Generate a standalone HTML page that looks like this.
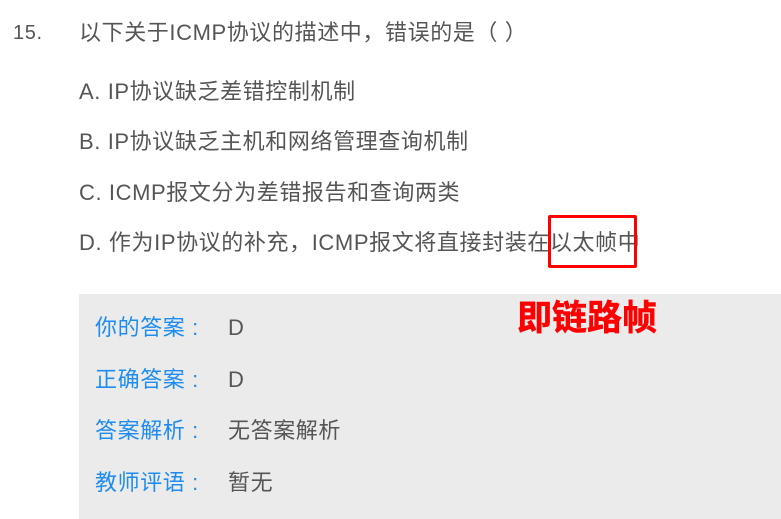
<!DOCTYPE html>
<html><head><meta charset="utf-8"><style>
body{margin:0;width:781px;height:519px;background:#fff;position:relative;overflow:hidden;font-family:"Liberation Sans","Noto Sans CJK SC",sans-serif;color:#555;font-size:22px;letter-spacing:0.6px}
.t{position:absolute;white-space:nowrap;line-height:26px}
.box{position:absolute;left:79px;top:294px;width:702px;height:225px;background:#ebebeb}
.l{color:#1e8cf0}
</style></head><body>
<div class="t" style="left:13px;top:20px;font-size:20px">15.</div>
<div class="t" style="left:79px;top:20px">以下关于ICMP协议的描述中，错误的是（ ）</div>
<div class="t" style="left:79px;top:79px">A. IP协议缺乏差错控制机制</div>
<div class="t" style="left:79px;top:129px">B. IP协议缺乏主机和网络管理查询机制</div>
<div class="t" style="left:79px;top:180px">C. ICMP报文分为差错报告和查询两类</div>
<div class="t" style="left:79px;top:230px">D. 作为IP协议的补充，ICMP报文将直接封装在以太帧中</div>
<div style="position:absolute;left:548px;top:215px;width:83px;height:47px;border:3px solid #f00;border-radius:2px"></div>
<div class="box"></div>
<div class="t l" style="left:95px;top:315px">你的答案 :</div><div class="t" style="left:228px;top:315px">D</div>
<div class="t l" style="left:95px;top:367px">正确答案 :</div><div class="t" style="left:228px;top:367px">D</div>
<div class="t l" style="left:95px;top:418px">答案解析 :</div><div class="t" style="left:228px;top:418px">无答案解析</div>
<div class="t l" style="left:95px;top:470px">教师评语 :</div><div class="t" style="left:228px;top:470px">暂无</div>
<div class="t" style="left:517px;top:299px;font-size:35px;line-height:40px;font-weight:bold;color:#f00;letter-spacing:0;-webkit-text-stroke:0.6px #f00;text-shadow:0 0 2px #fff,0 0 2px #fff">即链路帧</div>
</body></html>
